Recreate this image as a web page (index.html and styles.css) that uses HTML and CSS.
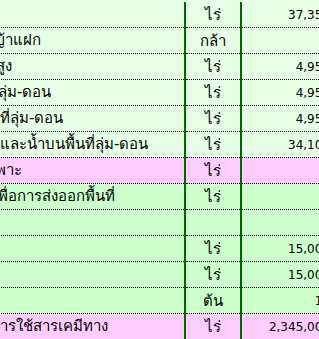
FILE: index.html
```html
<!DOCTYPE html>
<html lang="th">
<head>
<meta charset="utf-8">
<title>ตาราง</title>
<link rel="stylesheet" href="styles.css">
</head>
<body>
<div class="sheet">
  <div class="row light"><div class="c label"></div><div class="v"></div><div class="c unit">ไร่</div><div class="v"></div><div class="c num">37,350</div></div>
  <div class="row light"><div class="c label cut8">ญ้าแฝก</div><div class="v"></div><div class="c unit">กล้า</div><div class="v"></div><div class="c num"></div></div>
  <div class="row light"><div class="c label cut4">สูง</div><div class="v"></div><div class="c unit">ไร่</div><div class="v"></div><div class="c num">4,950</div></div>
  <div class="row light"><div class="c label cut2">ลุ่ม-ดอน</div><div class="v"></div><div class="c unit">ไร่</div><div class="v"></div><div class="c num">4,950</div></div>
  <div class="row light"><div class="c label">ที่ลุ่ม-ดอน</div><div class="v"></div><div class="c unit">ไร่</div><div class="v"></div><div class="c num">4,950</div></div>
  <div class="row light"><div class="c label">และน้ำบนพื้นที่ลุ่ม-ดอน</div><div class="v"></div><div class="c unit">ไร่</div><div class="v"></div><div class="c num">34,100</div></div>
  <div class="row pink"><div class="c label cut4">พาะ</div><div class="v"></div><div class="c unit">ไร่</div><div class="v"></div><div class="c num"></div></div>
  <div class="row green"><div class="c label cut2">พื่อการส่งออกพื้นที่</div><div class="v"></div><div class="c unit">ไร่</div><div class="v"></div><div class="c num"></div></div>
  <div class="row green"><div class="c label"></div><div class="v"></div><div class="c unit"></div><div class="v"></div><div class="c num"></div></div>
  <div class="row green"><div class="c label"></div><div class="v"></div><div class="c unit">ไร่</div><div class="v"></div><div class="c num">15,000</div></div>
  <div class="row green"><div class="c label"></div><div class="v"></div><div class="c unit">ไร่</div><div class="v"></div><div class="c num">15,000</div></div>
  <div class="row green"><div class="c label"></div><div class="v"></div><div class="c unit">ต้น</div><div class="v"></div><div class="c num">10</div></div>
  <div class="row pink"><div class="c label">ารใช้สารเคมีทาง</div><div class="v"></div><div class="c unit">ไร่</div><div class="v"></div><div class="c num">2,345,000</div></div>
</div>
</body>
</html>
```
FILE: styles.css
```css
html, body {
  margin: 0;
  padding: 0;
  overflow: hidden;
  background: #e6ffe6;
}
body {
  font-family: Tahoma, "DejaVu Sans", "Noto Sans", sans-serif;
  font-size: 12px;
  color: #000;
}
.sheet {
  margin-top: 2px;
  margin-left: -3px;
  width: 340px;
}
.row {
  display: grid;
  grid-template-columns: 187px 2px 54px 2px 95px;
  height: 26px;
}
.light { background: #e6ffe6; }
.green { background: #ccffcc; }
.pink { background: #ffccff; }
.c {
  box-sizing: border-box;
  height: 26px;
  border-bottom: 1px dotted #000;
  white-space: nowrap;
  overflow: hidden;
}
.v { background: #006600; }
.label, .unit { font-size: 15px; }
.label {
  padding-left: 3px;
  line-height: 25px;
}
.cut2 { text-indent: -2px; }
.cut4 { text-indent: -4px; }
.cut8 { text-indent: -8px; }
.unit {
  display: flex;
  align-items: center;
  justify-content: center;
  padding-top: 1px;
}
.num {
  display: flex;
  align-items: center;
  justify-content: flex-end;
  padding-right: 7px;
}
```
